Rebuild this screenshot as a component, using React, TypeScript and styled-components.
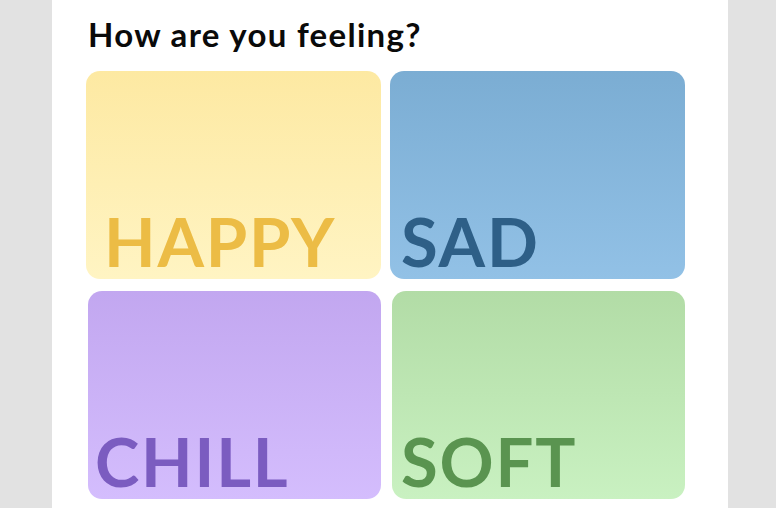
import React from "react";
import styled, { createGlobalStyle } from "styled-components";

const GlobalStyle = createGlobalStyle`
  html, body {
    margin: 0;
    padding: 0;
    background: #e2e2e2;
    font-family: Lato, "Noto Sans", sans-serif;
  }
`;

const Page = styled.div`
  height: 508px;
  overflow: hidden;
  display: flex;
`;

const Panel = styled.main`
  width: 676px;
  margin-left: 52px;
  box-sizing: border-box;
  padding: 14px 0 0 34px;
  background: #ffffff;
`;

const Title = styled.h1`
  margin: 0 0 17px 2px;
  font-size: 33px;
  line-height: 40px;
  font-weight: 700;
  letter-spacing: 1.3px;
  color: #0a0a0a;
`;

const MoodGrid = styled.div`
  display: grid;
  grid-template-columns: 295px 295px;
  grid-auto-rows: 208px;
  column-gap: 9px;
  row-gap: 12px;
`;

type Mood = {
  label: string;
  top: string;
  bottom: string;
  ink: string;
  inset: number;
  nudge: number;
};

const Card = styled.div<{ $top: string; $bottom: string; $nudge: number }>`
  display: flex;
  align-items: flex-end;
  margin-left: ${(p) => p.$nudge}px;
  border-radius: 14px;
  background: linear-gradient(180deg, ${(p) => p.$top} 0%, ${(p) => p.$bottom} 100%);
  cursor: pointer;
`;

const Label = styled.span<{ $ink: string; $inset: number }>`
  padding: 0 0 2px ${(p) => p.$inset}px;
  font-family: Lato, "Noto Sans", sans-serif;
  font-size: 67px;
  line-height: 72px;
  font-weight: 700;
  letter-spacing: 1.8px;
  color: ${(p) => p.$ink};
`;

const moods: Mood[] = [
  { label: "HAPPY", top: "#fde9a2", bottom: "#fff4c3", ink: "#ecbc45", inset: 18, nudge: 0 },
  { label: "SAD", top: "#7badd3", bottom: "#92c1e6", ink: "#2e5f87", inset: 11, nudge: 0 },
  { label: "CHILL", top: "#c2a7f0", bottom: "#d4bdfd", ink: "#7b5cc0", inset: 7, nudge: 2 },
  { label: "SOFT", top: "#b2dca6", bottom: "#c9f1c1", ink: "#5a9450", inset: 9, nudge: 2 },
];

export default function App() {
  return (
    <Page>
      <GlobalStyle />
      <Panel>
        <Title>How are you feeling?</Title>
        <MoodGrid>
          {moods.map((m) => (
            <Card key={m.label} $top={m.top} $bottom={m.bottom} $nudge={m.nudge}>
              <Label $ink={m.ink} $inset={m.inset}>
                {m.label}
              </Label>
            </Card>
          ))}
        </MoodGrid>
      </Panel>
    </Page>
  );
}
